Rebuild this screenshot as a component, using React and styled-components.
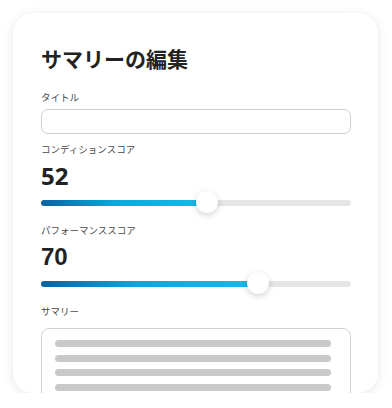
import React from "react";
import styled, { createGlobalStyle } from "styled-components";

const GlobalStyle = createGlobalStyle`
  body {
    margin: 0;
    background: #ffffff;
    font-family: "Noto Sans CJK JP", "Noto Sans", sans-serif;
  }
`;

const Page = styled.div`
  padding: 13px 14px 0 13px;
`;

const Card = styled.div`
  width: 365px;
  height: 380px;
  box-sizing: border-box;
  padding: 32px 27px 0 28px;
  background: #fff;
  border-radius: 20px;
  box-shadow: 0 2px 12px rgba(0, 0, 0, 0.09), 0 0 2px rgba(0, 0, 0, 0.04);
  overflow: hidden;
  display: flex;
  flex-direction: column;

  & > * {
    flex-shrink: 0;
  }
`;

const Title = styled.h1`
  margin: 0;
  font-size: 21px;
  line-height: 27px;
  font-weight: 700;
  color: #222;
`;

const Label = styled.div`
  margin-top: ${({ $top }) => $top}px;
  font-size: 9.5px;
  line-height: 14px;
  color: #4a4a4a;
`;

const Input = styled.div`
  margin-top: 5px;
  height: 25px;
  box-sizing: border-box;
  border: 1px solid #cfcfcf;
  border-radius: 7px;
  background: #fff;
`;

const Score = styled.div`
  margin-top: 6px;
  font-family: ${({ $alt }) =>
    $alt ? '"Liberation Sans", Arial, sans-serif' : '"Noto Sans", sans-serif'};
  font-size: 24px;
  line-height: 28px;
  font-weight: 700;
  color: #222;
`;

const Slider = styled.div`
  position: relative;
  margin-top: 1px;
  height: 24px;
  display: flex;
  align-items: center;
`;

const Track = styled.div`
  position: relative;
  width: 100%;
  height: 6px;
  border-radius: 3px;
  background: #e5e5e5;
`;

const Fill = styled.div`
  height: 100%;
  border-radius: 3px;
  background: linear-gradient(90deg, #0a62a2 0%, #12a5dc 45%, #1ab9ea 100%);
`;

const Thumb = styled.div`
  position: absolute;
  top: 50%;
  width: 22px;
  height: 22px;
  margin: -12px 0 0 -11px;
  border-radius: 50%;
  background: #fff;
  box-shadow: 0 2px 6px rgba(0, 0, 0, 0.18);
`;

const SummaryBox = styled.div`
  margin-top: 10px;
  height: 90px;
  box-sizing: border-box;
  padding: 11px 19px 0 13px;
  border: 1px solid #d2d2d2;
  border-radius: 8px;
  display: flex;
  flex-direction: column;
  gap: 7.5px;
`;

const TextLine = styled.div`
  flex-shrink: 0;
  height: 7px;
  border-radius: 4px;
  background: #c9c9c9;
`;

function ScoreSlider({ value }) {
  const pos = `calc(20px + (100% - 29px) * ${value / 100})`;
  return (
    <Slider>
      <Track>
        <Fill style={{ width: pos }} />
        <Thumb style={{ left: pos }} />
      </Track>
    </Slider>
  );
}

export default function App() {
  return (
    <Page>
      <GlobalStyle />
      <Card>
        <Title>サマリーの編集</Title>
        <Label $top={18}>タイトル</Label>
        <Input />
        <Label $top={8}>コンディションスコア</Label>
        <Score>52</Score>
        <ScoreSlider value={52} />
        <Label $top={8}>パフォーマンススコア</Label>
        <Score $alt>70</Score>
        <ScoreSlider value={70} />
        <Label $top={8}>サマリー</Label>
        <SummaryBox>
          <TextLine />
          <TextLine />
          <TextLine />
          <TextLine />
          <TextLine />
        </SummaryBox>
      </Card>
    </Page>
  );
}
